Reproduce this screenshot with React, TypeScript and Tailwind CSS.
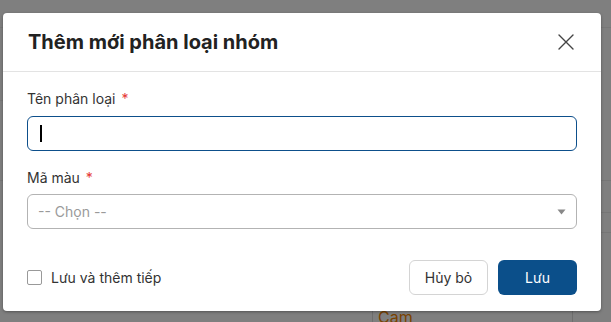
import React from "react";

export default function App() {
  return (
    <div
      className="relative h-[322px] w-[611px] overflow-hidden bg-[#7f7f7f]"
      style={{ fontFamily: "Inter, 'Noto Sans', sans-serif" }}
    >
      {/* faint background content under the overlay */}
      <div className="absolute left-0 right-0 top-[27px] h-px bg-[#777]" />
      <div className="absolute left-0 w-[10px] top-[100px] h-px bg-[#777]" />
      <div className="absolute left-0 right-0 top-[180px] h-px bg-[#767676]" />
      <div className="absolute left-[600px] right-0 top-[212px] h-px bg-[#767676]" />
      <div className="absolute left-[600px] right-0 top-[232px] h-px bg-[#767676]" />
      <div className="absolute left-[372px] top-[300px] bottom-0 w-px bg-[#6e6e6e]" />
      <div className="absolute left-[572px] top-[300px] bottom-0 w-px bg-[#6e6e6e]" />
      <div className="absolute left-[378px] top-[307px] text-[16px] leading-5 text-[#7a4200]">
        Cam
      </div>

      {/* modal */}
      <div className="absolute left-[3px] top-[13px] w-[598px] rounded-[4px] bg-white shadow-[0_1px_3px_rgba(0,0,0,0.35)]">
        <div className="flex h-[59px] items-center justify-between border-b border-[#e3e3e3] pl-[25px] pr-[26px]">
          <h2 className="text-[20px] font-bold leading-6 text-[#222]">
            Thêm mới phân loại nhóm
          </h2>
          <svg width="18" height="18" viewBox="0 0 18 18" fill="none">
            <path d="M2 2L16 16M16 2L2 16" stroke="#444" strokeWidth="1.4" strokeLinecap="round" />
          </svg>
        </div>

        <div className="px-[24px] pt-[16px]">
          <label className="mb-2 flex h-5 items-center text-[14px] text-[#333]">
            Tên phân loại
            <span className="ml-[6px] text-[#e53935]">*</span>
          </label>
          <div className="flex h-[35px] items-center rounded-[6px] border border-[#0d4f8b] pl-[12px]">
            <span className="h-[17px] w-[1.5px] bg-black" />
          </div>

          <label className="mb-[7px] mt-4 flex h-5 items-center text-[14px] text-[#333]">
            Mã màu
            <span className="ml-[6px] text-[#e53935]">*</span>
          </label>
          <div className="flex h-[35px] items-center justify-between rounded-[6px] border border-[#b3b3b3] pl-[10px] pr-[10px]">
            <span className="text-[14px] text-[#9a9a9a]">-- Chọn --</span>
            <svg width="9" height="6" viewBox="0 0 9 6">
              <path d="M0.5 0.5H8.5L4.5 5.5Z" fill="#888" />
            </svg>
          </div>
        </div>

        <div className="flex items-center justify-between px-[24px] pb-[16px] pt-[31px]">
          <label className="flex items-center gap-[9px] text-[14px] text-[#333]">
            <span className="h-[15px] w-[15px] rounded-[2px] border border-[#999] bg-white" />
            Lưu và thêm tiếp
          </label>
          <div className="flex gap-[10px]">
            <button className="h-[35px] w-[79px] rounded-[6px] border border-[#d4d4d4] bg-white text-[14px] text-[#333]">
              Hủy bỏ
            </button>
            <button className="h-[35px] w-[79px] rounded-[6px] bg-[#0b4f8a] text-[14px] text-white">
              Lưu
            </button>
          </div>
        </div>
      </div>
    </div>
  );
}
